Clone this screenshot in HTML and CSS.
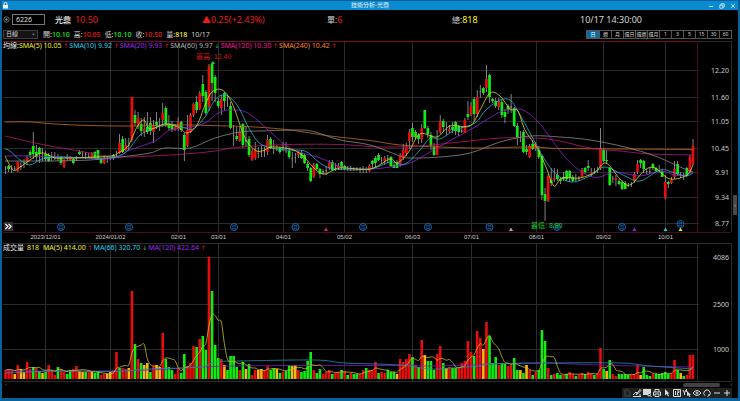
FILE: index.html
```html
<!DOCTYPE html>
<html lang="zh-Hant">
<head>
<meta charset="utf-8">
<title>技術分析-光鼎</title>
<link rel="stylesheet" href="styles.css">
</head>
<body>
<div class="window">
  <header class="titlebar">
    <svg class="lock" viewBox="0 0 8 8" aria-hidden="true"><path d="M2.3 3.5V2.2a1.7 1.7 0 0 1 3.4 0v1.3" fill="none" stroke="#fff" stroke-width="1"/><rect x="1.2" y="3.4" width="5.6" height="4" fill="#fff"/></svg>
    <h1 class="title">技術分析-光鼎</h1>
    <div class="window-buttons">
      <button type="button" aria-label="最小化"><svg viewBox="0 0 6 6"><path d="M1 3.5h4"/></svg></button>
      <button type="button" aria-label="還原"><svg viewBox="0 0 6 6"><path d="M.8 2.2h3v3h-3zM2 2V.8h3.2V4H4"/></svg></button>
      <button type="button" aria-label="關閉"><svg viewBox="0 0 6 6"><path d="M1.2 1.2l3.6 3.6M4.8 1.2L1.2 4.8"/></svg></button>
    </div>
  </header>

  <section class="quote">
    <div class="symbol">
      <button class="add" type="button" aria-label="加入"><svg viewBox="0 0 7 7"><circle cx="3.5" cy="3.5" r="2.7"/><path d="M2 3.5h3M3.5 2v3"/></svg></button>
      <input class="code" type="text" value="6226" aria-label="股票代號">
      <span class="name">光鼎</span>
      <span class="up">10.50</span>
    </div>
    <span class="up">▲0.25(+2.43%)</span>
    <span><span class="cjk">單:</span><span class="up">6</span></span>
    <span><span class="cjk">總:</span><span class="volume">818</span></span>
    <time>10/17 14:30:00</time>
  </section>

  <section class="options">
    <div class="select-wrap">
      <select class="period-select" aria-label="週期"><option>日線</option></select>
      <svg viewBox="0 0 4 4" aria-hidden="true"><path d="M0 1l2 2 2-2z"/></svg>
    </div>
    <div class="prices">
      <span>開:<b class="down">10.10</b></span>
      <span>高:<b class="up">10.65</b></span>
      <span>低:<b class="down">10.10</b></span>
      <span>收:<b class="up">10.50</b></span>
      <span>量:<b class="volume">818</b></span>
      <span>10/17</span>
    </div>
    <div class="periods">
      <button class="active" type="button">日</button><button type="button">週</button><button type="button">月</button><button type="button">還日</button><button type="button">還週</button><button type="button">還月</button><button type="button">1</button><button type="button">3</button><button type="button">5</button><button type="button">15</button><button type="button">30</button><button type="button">60</button>
    </div>
  </section>

  <main class="charts">
    <section class="panel">
      <div class="legend">
        <span class="heading">均線:</span><span class="ma5">SMA(5) 10.05 <i class="rise">↑</i></span>
        <span class="ma10">SMA(10) 9.92 <i class="rise">↑</i></span>
        <span class="ma20">SMA(20) 9.93 <i class="rise">↑</i></span>
        <span class="ma60">SMA(60) 9.97 <i class="fall">↓</i></span>
        <span class="ma120">SMA(120) 10.30 <i class="rise">↑</i></span>
        <span class="ma240">SMA(240) 10.42 <i class="rise">↑</i></span>
      </div>
      <svg id="price" class="chart" viewBox="2 41 736 202" role="img" aria-label="K線圖"></svg>
      <button class="expand" type="button" aria-label="展開"><svg viewBox="0 0 10 10"><path d="M1.5 2l3 3-3 3M5 2l3 3-3 3"/></svg></button>
      <button class="side" type="button" aria-label="側欄">‹</button>
    </section>
    <section class="panel">
      <div class="legend">
        <span class="heading">成交量</span>
        <span class="ma5">818</span>
        <span class="ma5">MA(5) 414.00 <i class="rise">↑</i></span>
        <span class="ma10">MA(66) 320.70 <i class="fall">↓</i></span>
        <span class="ma20">MA(120) 422.64 <i class="rise">↑</i></span>
      </div>
      <svg id="volume" class="chart" viewBox="2 243 736 139" role="img" aria-label="成交量圖"></svg>
    </section>
  </main>

  <div class="scroll"><span>‹</span><span class="thumb"></span><span>›</span></div>

  <footer class="tools">
    <button type="button" class="dim" aria-label="文件"><svg viewBox="0 0 10 10"><path d="M3 2h3l2 2v4H3z"/></svg></button>
    <button type="button" aria-label="畫線"><svg viewBox="0 0 10 10"><path d="M1 8.500h8M1 7l3-3 2 2M4 6.500l4-5 1 1-4 4zM7 7h2"/></svg></button>
    <button type="button" aria-label="檢視"><svg viewBox="0 0 10 10"><path class="solid" d="M1 1h8v4L6 7H1z"/><circle cx="7" cy="6.500" r="1.500"/><path d="M8 7.500l1.500 1.500"/></svg></button>
    <button type="button" aria-label="列印"><svg viewBox="0 0 10 10"><path d="M3 4V1.500h4V4M2 7.500H1.500V4h7v3.500H8M3 6h4v2.500H3z"/></svg></button>
    <button type="button" aria-label="游標"><svg viewBox="0 0 10 10"><path class="solid" d="M3 1l4.500 4.500H5.800L7 8 6 8.600 4.800 6.100 3 7.500z"/></svg></button>
    <button type="button" aria-label="資料"><svg viewBox="0 0 10 10"><path d="M1.500 1.500h7v7h-7zM3.500 3v4M5 3h2v1.500H5.500V7H7"/></svg></button>
    <button type="button" aria-label="十字線"><svg viewBox="0 0 10 10"><path d="M1 2l1.500 3L4 2M2.500 5v2M4.500 1v3"/><path class="solid" d="M5 3l4 4H7.500l1 1.500-1 .5-1-1.700L5 8z"/></svg></button>
    <button type="button" aria-label="顯示"><svg viewBox="0 0 10 10"><path d="M1 5q4-5 8 0-4 5-8 0z"/><circle cx="5" cy="5" r="1"/></svg></button>
    <button type="button" aria-label="重新整理"><svg viewBox="0 0 10 10"><path d="M3 7.700A3.200 3.200 0 1 1 7 7.700M5.500 8.500l1.700-1L6.800 6"/></svg></button>
    <button type="button" aria-label="縮小"><svg viewBox="0 0 10 10"><path d="M2 5h6"/></svg></button>
    <button type="button" aria-label="放大"><svg viewBox="0 0 10 10"><path d="M2 5h6M5 2v6"/></svg></button>
  </footer>
</div>
<script src="chart.js"></script>
</body>
</html>
```
FILE: styles.css
```css
* { box-sizing: border-box; }

body {
  margin: 0;
  background: #000;
  color: #d4d4d4;
  font-family: "Noto Sans", "Noto Sans CJK TC", sans-serif;
  font-size: 7px;
  line-height: 9px;
}

button, input, select {
  margin: 0;
  padding: 0;
  border: 0;
  background: none;
  color: inherit;
  font: inherit;
}

svg { display: block; }

.window {
  display: flex;
  flex-direction: column;
  min-height: 100vh;
  border: solid #07639a;
  border-width: 1px 2px 3px;
}

.titlebar {
  display: grid;
  grid-template-columns: 1fr auto 1fr;
  align-items: center;
  height: 9px;
  background: #0c8ad0;
}
.lock { width: 7px; height: 7px; }
.title {
  margin: 0;
  color: #e4f3fb;
  font-size: 6px;
  font-weight: 400;
  line-height: 9px;
}
.window-buttons {
  display: flex;
  justify-content: flex-end;
  gap: 5px;
  padding-right: 2px;
}
.window-buttons svg { width: 6px; height: 6px; fill: none; stroke: #e4f3fb; }
.window-buttons path { stroke-width: 0.8; }

.quote {
  display: grid;
  grid-template-columns: 200fr 125fr 125fr 128fr 158fr;
  align-items: center;
  height: 18px;
  font-size: 9px;
}
.symbol { display: flex; align-items: center; }
.add svg { width: 7px; height: 7px; margin: 0 2px 0 1px; fill: none; stroke: #999; stroke-width: 0.7; }
.code {
  width: 33px;
  height: 11px;
  padding: 0 3px;
  border: 1px solid #777;
  color: #ddd;
  font-size: 7px;
}
.name { margin: 0 4px 0 10px; color: #eee; font-size: 8px; font-weight: 500; }
.cjk { font-size: 8px; }

.up { color: #e81c1c; }
.down { color: #1ce82c; }
.volume { color: #f8f818; }

.options { display: flex; align-items: center; height: 13px; }
.select-wrap { position: relative; margin-left: 1px; }
.select-wrap svg {
  position: absolute;
  top: 3px;
  right: 3px;
  width: 3px;
  height: 3px;
  fill: #888;
  pointer-events: none;
}
.period-select {
  display: block;
  appearance: none;
  width: 35px;
  height: 9px;
  padding-left: 2px;
  border: 1px solid #3c3c3c;
  background: #141414;
  font-size: 6px;
  line-height: 7px;
}
.prices { display: flex; gap: 4px; margin-left: 5px; white-space: nowrap; }
.prices b { font-weight: 500; }
.periods { display: flex; margin: 0 6px 0 auto; border: 1px solid #555; }
.periods button {
  width: 12px;
  height: 7px;
  font-size: 5px;
  line-height: 7px;
  white-space: nowrap;
}
.periods button + button { border-left: 1px solid #555; }
.periods .active { background: #0b6ca5; color: #fff; }

.panel { position: relative; }
.chart { width: 100%; height: auto; }
.chart text { fill: #c8c8c8; }
.chart .axis { font-size: 7px; text-anchor: end; }
.chart .date { font: 6px "Liberation Sans", sans-serif; text-anchor: middle; }
.chart .month { font-size: 5px; text-anchor: middle; fill: #1878c8; }
.chart .high { fill: #c81818; }
.chart .low { fill: #1cc82c; }
.chart .extreme { font: 7px "Liberation Sans", "Noto Sans CJK TC", sans-serif; }
.chart .ma { fill: none; stroke-width: 0.8; stroke-linejoin: round; }

.legend {
  position: absolute;
  top: 0;
  left: 1px;
  display: flex;
  gap: 1px;
  white-space: nowrap;
}
.heading { color: #eee; }
.heading + .ma5 { margin-left: -1px; }
.panel:last-child .heading + .ma5 { margin: 0 3px 0 2px; }
.ma5 { color: #f0f020; }
.ma10 { color: #20d4ec; }
.ma20 { color: #a028e8; }
.ma60 { color: #b0b0b0; }
.ma120 { color: #f01c9c; }
.ma240 { color: #f8841c; }
.legend i { font: 6px "DejaVu Sans", sans-serif; }
.rise { color: #e01818; }
.fall { color: #18d828; }

.expand {
  position: absolute;
  bottom: 12px;
  left: 2px;
  background: #303030;
}
.expand svg { width: 9px; height: 9px; fill: none; stroke: #fff; stroke-width: 1.200; }
.side {
  position: absolute;
  right: 1px;
  bottom: 28px;
  width: 4px;
  height: 20px;
  background: #484848;
  color: #ccc;
  font-size: 6px;
}

.scroll {
  display: flex;
  align-items: center;
  height: 5px;
  padding: 0 6px 0 3px;
  color: #777;
  font-size: 6px;
  line-height: 5px;
}
.thumb { width: 37px; height: 4px; margin: 0 10px 0 auto; border-radius: 2px; background: #424242; }

.tools {
  display: flex;
  justify-content: flex-end;
  margin-top: auto;
  padding-right: 6px;
}
.tools button { width: 10px; height: 10px; background: #202020; }
.tools svg { width: 10px; height: 10px; fill: none; stroke: #d8d8d8; stroke-width: 1; }
.tools .solid { fill: #d8d8d8; stroke: none; }
.tools .dim svg { stroke: #444; }
```
FILE: chart.js
```js
// One candle per entry: colour, high, body top, body bottom, low.
const CANDLES = `w 166 171 172 174|g 165 166 169 172|w 165 168 169 173|w 166 168 169 171|r 161 162 171 172|w 162 166 167 170|w 159 162 163 168|r 155 158 162 165|g 150 152 155 158|g 132 146 154 159
g 145 152 157 161|g 147 148 154 163|w 148 152 153 161|g 151 154 159 161|g 153 155 161 162|w 152 157 158 161|w 152 157 158 160|w 154 157 158 161|g 156 157 163 165|r 159 160 167 168
w 154 158 159 161|r 156 158 160 161|g 157 159 163 164|w 156 158 159 161|g 150 152 154 155|w 151 154 155 158|w 152 154 155 159|w 153 156 157 158|r 152 154 158 159|g 151 152 158 159
g 150 150 159 160|g 158 159 163 164|r 157 158 163 164|w 156 158 159 163|w 156 158 159 160|g 154 155 158 160|w 151 155 156 158|r 134 143 153 154|g 136 139 152 153|r 138 145 150 151
w 138 145 146 151|r 97 97 140 142|g 110 115 123 126|r 112 118 124 129|g 118 124 131 136|r 117 129 132 137|g 112 127 132 134|g 117 123 131 135|r 120 125 132 143|g 112 122 126 129
w 118 125 126 131|r 103 113 120 127|g 106 108 124 127|g 115 124 128 130|g 121 125 130 132|r 124 127 130 131|r 117 122 129 131|g 121 122 130 132|g 133 135 150 161|r 115 130 146 147
r 113 115 132 133|r 103 104 115 117|g 96 102 110 113|r 91 93 109 110|g 75 84 96 102|g 90 92 113 115|r 64 66 107 111|g 62 64 83 101|g 75 77 93 102|g 98 101 106 108
r 95 99 108 115|g 92 93 101 110|w 95 103 104 107|g 102 106 128 129|w 125 135 136 146|g 127 136 139 141|r 126 132 141 142|g 123 124 145 148|w 126 140 142 147|g 136 139 155 157
r 149 151 160 161|r 142 150 158 160|w 147 153 154 158|w 145 152 153 157|w 147 151 153 157|r 135 140 152 155|g 137 139 148 149|w 140 148 149 154|r 145 149 150 151|g 147 148 152 154
w 142 148 149 151|w 142 148 149 153|g 148 151 157 159|w 152 158 159 168|w 153 157 158 163|r 151 152 155 158|g 150 153 158 159|g 154 155 163 164|g 162 164 168 171|g 167 168 181 182
r 163 165 177 178|g 163 164 169 170|g 168 169 174 178|w 169 171 173 175|w 166 170 171 175|r 160 163 168 170|g 160 162 170 171|w 163 167 169 171|r 163 166 168 170|g 161 162 168 170
g 165 166 169 170|w 166 168 169 171|w 166 168 169 171|w 167 168 169 171|w 167 168 169 171|w 167 168 169 173|w 166 168 169 173|w 167 169 170 173|r 164 166 171 172|g 160 161 164 168
g 156 158 163 167|g 153 155 160 161|w 157 160 161 164|r 156 158 161 165|w 155 158 159 163|g 156 157 166 167|g 163 165 168 168|g 160 163 168 168|r 153 155 164 167|r 144 150 158 160
r 143 147 153 156|r 129 132 141 149|g 123 128 137 142|g 130 132 137 140|g 133 135 139 144|r 124 128 139 143|g 110 110 128 129|g 126 128 134 138|g 132 135 146 150|g 143 147 155 156
r 130 145 155 155|r 115 121 132 134|g 119 121 127 132|w 122 129 130 135|r 125 129 131 133|g 122 127 130 133|g 121 122 131 135|g 125 126 132 136|w 127 130 132 133|r 118 120 133 133
g 101 114 117 120|r 102 106 115 116|g 97 99 114 121|r 90 97 114 117|w 85 91 92 98|g 87 88 93 95|r 65 79 88 92|g 74 75 97 103|g 98 99 101 103|g 98 101 106 108
r 98 101 107 110|g 100 102 115 118|g 109 112 117 123|g 104 106 110 114|w 94 106 108 113|g 107 108 126 127|g 123 126 137 145|w 131 137 138 142|g 130 132 152 153|g 145 149 152 155
r 144 146 157 158|g 140 144 149 150|r 142 144 148 151|g 146 150 157 159|g 155 156 195 200|g 188 194 201 221|r 174 176 201 202|g 168 180 183 186|r 168 178 180 182|g 169 175 179 181
g 177 179 181 184|g 172 177 179 181|g 170 171 179 181|g 170 171 178 182|g 175 177 181 182|w 174 179 180 182|w 176 178 179 181|r 168 170 177 178|g 167 168 172 174|g 160 166 168 171
r 168 172 173 176|w 168 171 172 174|w 167 170 171 173|r 128 149 168 170|g 148 150 161 162|g 150 160 161 164|g 167 168 185 186|w 176 178 179 183|r 175 178 180 186|g 179 181 184 185
g 180 182 189 190|g 181 183 189 189|w 183 185 186 187|w 182 184 185 187|r 172 174 181 183|r 160 164 172 174|g 159 160 163 168|g 160 161 169 173|w 169 171 172 174|w 168 171 172 174
g 163 164 168 170|g 167 168 171 172|w 165 170 171 173|g 170 171 177 177|r 175 182 198 199|g 181 182 184 188|r 177 180 183 184|r 161 169 177 179|g 161 164 174 176|w 172 174 175 178
w 173 175 176 180|g 167 168 176 177|r 155 157 172 173|r 139 146 164 165`.split(/[|\n]/).map(s => s.split(" "));

// One volume bar per entry: colour and height.
const VOLUMES = `r9 r10 r9 y5 r14 y10 y7 r17 r10 g12 r11 g8 y6 g7 r14 r9 r4 g12 r10 r7 g5 g9 r10 r13 y8 y7 g7 r8 y7 g6
g7 r4 r5 y5 y7 r9 r27 g11 r11 r10 y11 r88 g35 r20 g16 y14 y16 g7 r13 y14 y12 r46 g20 g12 g9 r5 r11 g6 g25 r13
r16 r33 g32 r40 g43 g29 r122 g88 g34 g21 r20 y14 g9 g23 g23 g12 r9 g17 y10 g15 r4 r9 y9 y10 r9 r13 g9 g11 y10 g6
r7 g8 g14 y13 y14 r9 g7 g8 g18 g27 r9 g6 g10 r5 r7 r9 g5 r6 r7 g9 r8 g4 r6 g5 g5 r5 r9 g11 r9 r9
r17 g6 r7 r6 g9 g7 g7 y5 r20 r17 r20 r25 g22 r14 g12 r39 y24 g18 g18 g9 r25 r33 g16 y11 r12 g11 g11 r11 r16 r18
r38 r27 g23 r48 r41 y30 r57 g43 g16 g22 r14 g16 g15 r13 r14 g21 g9 y9 g6 y14 r9 g4 r7 g9 g49 g38 r11 g4 r5 g6
g4 r4 g5 r7 r5 g3 r4 r6 g5 r7 r5 g4 r6 r31 g10 y8 g19 r5 r3 g5 g5 g5 g4 r4 r5 r14 y4 g12 g4 g3
r5 g5 g5 g6 g7 g5 r6 r19 g9 y6 g3 r4 r24 r24`.split(/\s+/).map(s => [s[0], +s.slice(1)]);

const COLORS = { r: "#e80c0c", g: "#10ec10", y: "#f8b810", w: "#909090" };
const xAt = i => 5.5 + i * 3.083;
const line = (x1, y1, x2, y2, color) =>
  `<path d="M${x1} ${y1}L${x2} ${y2}" stroke="${color}" stroke-width="1"/>`;
const text = (cls, x, y, value) => `<text class="${cls}" x="${x}" y="${y}">${value}</text>`;

// Smooth path through points given as "x,y x,y ...".
function curve(points, color) {
  const p = points.split(" ").map(s => s.split(",").map(Number));
  let d = `M${p[0]}`;
  for (let i = 0; i < p.length - 1; i++) {
    const a = p[i - 1] || p[i], b = p[i], c = p[i + 1], e = p[i + 2] || c;
    d += `C${b[0] + (c[0] - a[0]) / 6},${b[1] + (c[1] - a[1]) / 6} ${c[0] - (e[0] - b[0]) / 6},${c[1] - (e[1] - b[1]) / 6} ${c}`;
  }
  return `<path class="ma" d="${d}" stroke="${color}"/>`;
}

const GRID = "#2b2b2b", FRAME = "#4a0c1c";
const MONTHS = [[45.5, "2023/12/01"], [110.5, "2024/01/02"], [178.5, "02/01"], [218.5, "03/01"], [283.5, "04/01"], [344.5, "05/02"], [412.5, "06/03"], [471.5, "07/01"], [536.5, "08/01"], [603.5, "09/02"], [665.5, "10/01"]];

let price = "";
for (const [x] of MONTHS) price += line(x, 42, x, 232, GRID);
for (const [y, v] of [[70.5, "12.20"], [97.5, "11.60"], [121.5, "11.05"], [148.5, "10.45"], [172.5, "9.91"], [197.5, "9.34"], [223.5, "8.77"]]) {
  price += line(3, y, 699, y, GRID) + text("axis", 729, y + 2.5, v);
}
price += line(3, 41.5, 697, 41.5, "#701028") + line(697, 41.5, 731, 41.5, GRID)
  + line(3, 232.5, 731, 232.5, FRAME) + line(697.5, 41, 697.5, 232, FRAME)
  + line(731.5, 41, 731.5, 232, GRID);
for (const [x, label] of MONTHS) price += text("date", x, 239, label);

CANDLES.forEach(([c, high, top, bottom, low], i) => {
  const x = xAt(i), w = c === "w" ? 1.2 : 2.7;
  price += `<rect x="${x - 0.4}" y="${high}" width=".8" height="${low - high}" fill="#a0a0a0"/>`
    + `<rect x="${x - w / 2}" y="${top}" width="${w}" height="${bottom - top}" fill="${COLORS[c]}"/>`;
});

price += curve("5,122 30,122 55,124 90,125.5 130,126 180,125 210,125.500 255,127 290,130 330,136 370,140.500 400,145 440,147 480,148 530,147 560,148.500 620,149 693,149.500", "#c86c10");
price += curve("5,136 40,144 90,153 115,157 150,156 185,154 215,151 240,147 290,144.500 340,144.500 380,147 420,146 460,142 500,138 530,138 555,140 590,148 620,151 650,154 693,155", "#b8186c");
price += curve("5,161 50,161 90,160 120,157 150,153 165,148 190,148 215,138 240,132 260,131 300,130 315,132 340,140 370,145 400,156 410,158 440,157 470,153 500,142 530,136 560,137 590,140 625,147 655,156 680,167 693,172", "#888");
price += curve("5,156 30,156 90,158 115,158 130,150 155,141 170,130 190,127 205,123 220,112 235,110 248,113 265,127 290,148 320,158 345,168 370,169 390,167 410,163 430,152 455,138 475,127 500,112 515,109 525,111 540,124 560,151 575,167 590,176 600,177 615,172 640,176 660,171 675,175 685,175 693,172", "#9420d8");
price += curve("5,149 10,151 20,160 30,165 42,159 60,157 90,158 115,157 128,150 140,135 155,128 170,124 182,127 193,129 205,117 215,100 225,95 237,105 250,130 262,145 285,150 305,151 320,163 335,169 370,169 390,162 405,164 420,150 430,138 440,139 455,130 475,123 485,111 498,101 510,100 520,115 530,133 545,160 557,175 572,182 590,176 605,167 625,176 640,181 660,170 672,172 685,176 693,173", "#20b8d0");
price += curve("5,156 13,170 20,167 30,160 42,153 55,158 65,158 75,158 110,156 118,153 128,146 137,127 144,120 150,129 165,124 178,127 187,133 197,125 205,105 212,92 222,90 232,103 245,138 255,150 262,151 272,147 290,149 302,155 315,169 325,174 340,168 370,169 390,159 397,163 408,153 420,134 437,137 450,126 470,126 480,110 490,93 500,96 510,109 518,111 525,130 537,148 546,167 554,186 562,178 580,178 595,172 606,163 620,179 630,185 645,170 655,168 670,179 687,175 693,165", "#e0d820");

for (const [x, y] of [[61, 227], [129, 227], [234, 227], [295.5, 227], [363, 227], [428, 227], [489.5, 227], [557, 227], [622, 227], [680.5, 224]]) {
  price += `<circle cx="${x}" cy="${y}" r="3.500" fill="none" stroke="#1470bc" stroke-width=".9"/>` + text("month", x, y + 2, "月");
}
for (const [x, color] of [[326, "#e01890"], [511, "#aaa"], [634.5, "#9020d8"], [665.5, "#20c8e0"], [680.5, "#e4e420"]]) {
  price += `<path d="M${x} 227.500l2 3.500h-4z" fill="${color}"/>`;
}
price += text("extreme high", 196, 59, "最高: 12.40")
  + text("extreme low", 531, 228, "最低: 8.80")
  + `<path d="M211 64l2-3 2 3z" fill="#18d828"/>`;
document.getElementById("price").innerHTML = price;

const BASE = 379;
let volume = line(3, 243.5, 731, 243.5, GRID) + line(3, 381.5, 731, 381.5, GRID) + line(731.5, 243, 731.5, 382, GRID) + line(697.5, 243, 697.5, 382, GRID);
for (const [x] of MONTHS) volume += line(x, 244, x, 381, GRID);
for (const [y, v] of [[257.5, "4086"], [304.5, "2500"], [349.5, "1000"]]) {
  volume += line(3, y, 699, y, GRID) + text("axis", 729, y + 2.5, v);
}
VOLUMES.forEach(([c, h], i) => {
  volume += `<rect x="${xAt(i) - 1.3}" y="${BASE - h}" width="2.600" height="${h}" fill="${COLORS[c]}"/>`;
});
const average = VOLUMES.map((_, i) => {
  const part = VOLUMES.slice(Math.max(0, i - 4), i + 1);
  return `${xAt(i)},${BASE - part.reduce((sum, v) => sum + v[1], 0) / part.length}`;
});
volume += curve("5,371 60,371 100,371 150,370 200,367 240,366 300,365.500 400,365.500 430,366 470,365 490,364 540,363 600,365 640,366 693,367", "#8418c4");
volume += curve("5,373 60,371 115,371.500 150,369 200,367 215,362 240,361 315,360 345,363 400,365 430,369 450,368 480,366 490,364 545,363 620,363 650,366 693,369", "#2090a8");
volume += curve(average.join(" "), "#c8c020");
document.getElementById("volume").innerHTML = volume;
```
